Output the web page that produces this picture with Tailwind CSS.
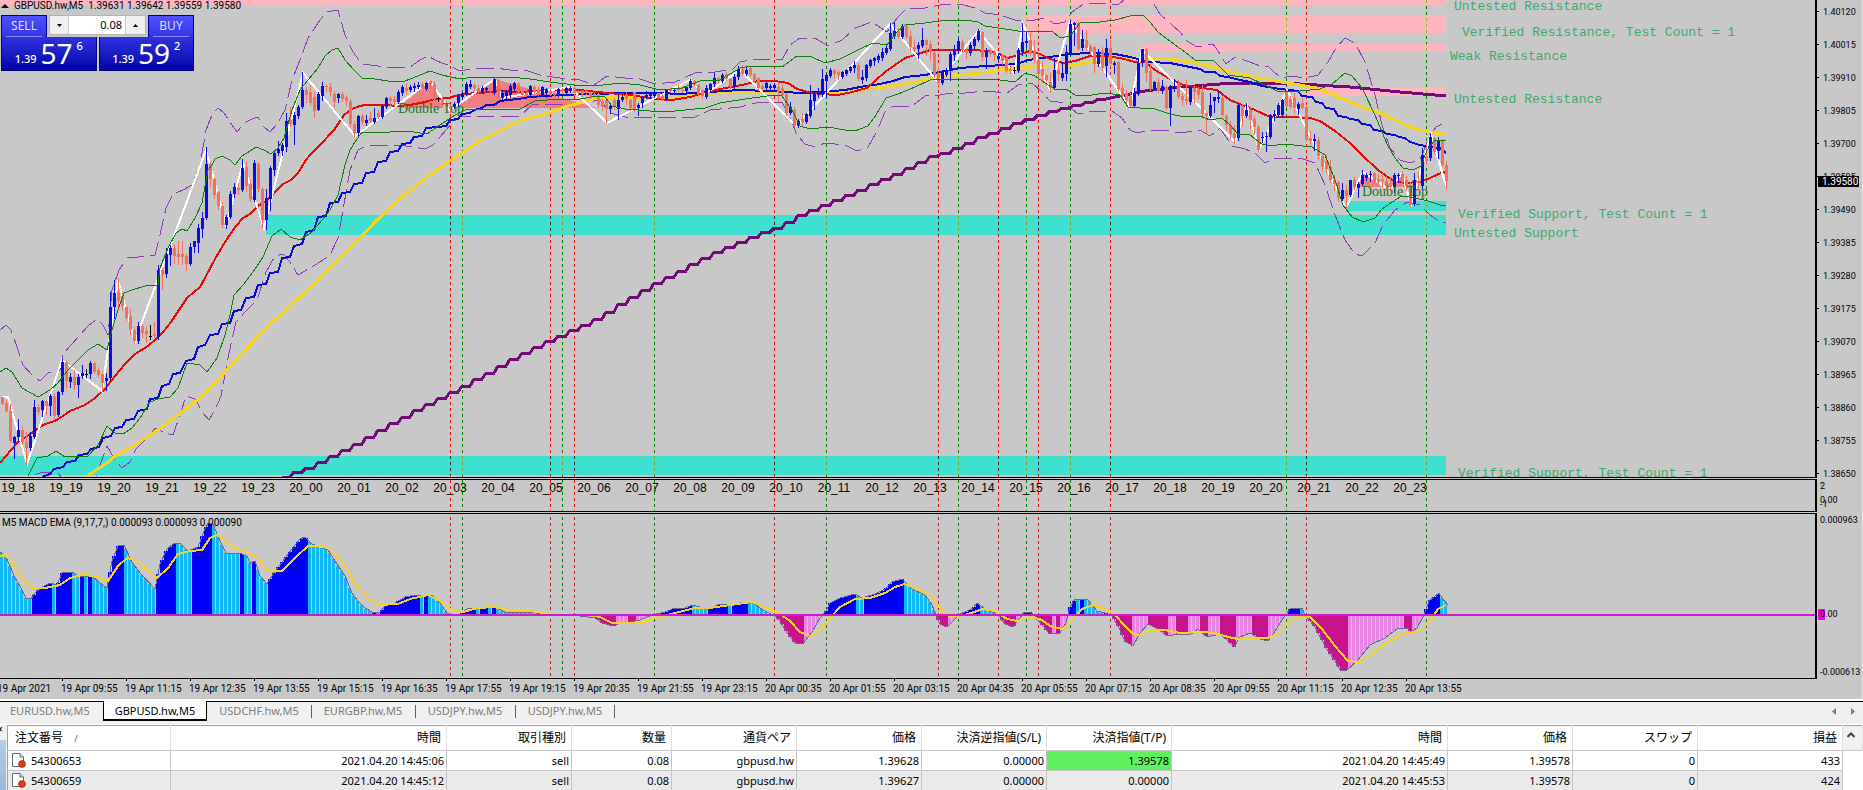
<!DOCTYPE html>
<html lang="ja">
<head>
    <meta charset="UTF-8">
    <meta name="viewport" content="width=device-width, initial-scale=1.0">
    <title>GBPUSD.hw,M5</title>
    <script src="https://cdn.jsdelivr.net/npm/@tailwindcss/browser@4"></script>
</head>
<body class="flex flex-col min-h-screen overflow-hidden bg-[#f0f0f0] text-black font-['Noto_Sans','Noto_Sans_CJK_JP',sans-serif]">

    <!-- Charts -->
    <main class="flex flex-col gap-px bg-[#c8c8c8] border-r border-[#e4e4e4] font-['Roboto',sans-serif] text-[10px] leading-[14px]">

        <!-- Price chart -->
        <section class="relative flex">
            <div class="flex-1 min-w-0 border-r-2 border-b border-black">
                <svg id="price" class="block w-full h-[477px]" shape-rendering="crispEdges"></svg>
            </div>
            <div id="prices" class="relative w-[45px] h-[478px] overflow-hidden">
                <div class="absolute left-px top-[176px] w-[41px] h-[11px] bg-black text-white pl-1 leading-[11px]">1.39580</div>
            </div>

            <!-- One click trading -->
            <div class="absolute left-0 top-0">
                <h1 class="flex items-center gap-[5px] pl-px h-[11px] whitespace-pre"><svg class="w-2 h-[4px]" viewBox="0 0 8 4"><path d="M0 4L4 0L8 4Z"/></svg><span>GBPUSD.hw,M5  1.39631 1.39642 1.39559 1.39580</span></h1>
                <div class="w-[194px] pl-px pt-1 font-['Noto_Sans',sans-serif]">
                    <div class="flex h-[22px] text-[12px] text-[#dcdcff]">
                        <button class="w-[46px] border border-b-0 border-[#000090] bg-linear-to-b from-[#5050ff] to-[#3434e4] px-1"><span class="block h-[21px] leading-[20px] border-b border-[#8c8cf4]">SELL</span></button>
                        <div class="flex flex-1 mx-[2px] mb-[2px] border border-[#b4b4b4] bg-[#f0f0f0]">
                            <button class="w-[18px] flex items-center justify-center" aria-label="Decrease volume"><svg class="w-[5px] h-[3px]" viewBox="0 0 5 3"><path d="M0 0H5L2.500 3Z"/></svg></button>
                            <input class="w-[58px] bg-white text-right text-black text-[11px] pr-[3px] border-x border-[#c8c8c8]" aria-label="Volume" value="0.08">
                            <button class="flex-1 flex items-center justify-center" aria-label="Increase volume"><svg class="w-[5px] h-[3px]" viewBox="0 0 5 3"><path d="M0 3H5L2.500 0Z"/></svg></button>
                        </div>
                        <button class="w-[46px] border border-b-0 border-[#000090] bg-linear-to-b from-[#5050ff] to-[#3434e4] px-1"><span class="block h-[21px] leading-[20px] border-b border-[#8c8cf4]">BUY</span></button>
                    </div>
                    <div class="flex gap-[2px] h-[34px] text-white">
                        <button class="flex flex-1 justify-center gap-1 border border-t-0 border-[#000080] bg-linear-to-b from-[#3030e0] to-[#0000a8]">
                            <span class="pt-[15px] text-[11px] font-medium">1.39</span><span class="text-[28px] leading-[32px]">57</span><span class="pt-[2px] text-[11px] font-medium">6</span>
                        </button>
                        <button class="flex flex-1 justify-center gap-1 border border-t-0 border-[#000080] bg-linear-to-b from-[#3030e0] to-[#0000a8]">
                            <span class="pt-[15px] text-[11px] font-medium">1.39</span><span class="text-[28px] leading-[32px]">59</span><span class="pt-[2px] text-[11px] font-medium">2</span>
                        </button>
                    </div>
                </div>
            </div>
        </section>

        <!-- Hour labels -->
        <section class="flex">
            <div class="flex-1 min-w-0 border-r-2 border-y border-black">
                <svg id="hours" class="block w-full h-[31px]" shape-rendering="crispEdges"></svg>
            </div>
            <div class="relative w-[45px] pl-[3px] text-[9px]">
                <div>2</div>
                <div class="absolute top-[14px]">0.00</div>
                <div class="absolute top-[18px]">-1</div>
            </div>
        </section>

        <!-- MACD -->
        <section class="relative flex">
            <div class="flex-1 min-w-0 border-r-2 border-y border-black">
                <svg id="macd" class="block w-full h-[164px]" shape-rendering="crispEdges"></svg>
            </div>
            <div class="relative flex flex-col justify-between w-[45px] pl-[3px] whitespace-nowrap text-[9px]">
                <div>0.000963</div>
                <div>-0.000613</div>
                <div class="absolute left-px top-[96px] h-[11px] leading-[11px]"><span class="absolute inset-y-0 left-0 w-[7px] bg-[#f000f0]"></span><span class="relative pl-[2px]">0.00</span></div>
            </div>
            <h2 class="absolute left-[2px] top-[3px]">M5 MACD EMA (9,17,7,) 0.000093 0.000093 0.000090</h2>
        </section>

        <div class="h-[20px] -mt-px overflow-hidden">
            <svg id="times" class="block w-full h-[20px]" shape-rendering="crispEdges"></svg>
        </div>
    </main>

    <!-- Chart tabs -->
    <nav class="flex items-start h-[25px] border-t-2 border-white text-[11px] leading-[18px] text-[#7c7c7c]">
        <div class="flex flex-1 h-[20px] border-t border-black">
            <a href="#" class="w-[103px] pl-[10px]">EURUSD.hw,M5</a>
            <a href="#" class="w-[104px] h-[20px] -mt-px bg-white text-black text-center border-x border-b-2 border-black pt-px">GBPUSD.hw,M5</a>
            <a href="#" class="w-[104px] text-center">USDCHF.hw,M5</a>
            <a href="#" class="w-[104px] text-center relative before:absolute before:left-0 before:top-[3px] before:h-[13px] before:border-l before:border-[#606060]">EURGBP.hw,M5</a>
            <a href="#" class="w-[100px] text-center relative before:absolute before:left-0 before:top-[3px] before:h-[13px] before:border-l before:border-[#606060]">USDJPY.hw,M5</a>
            <a href="#" class="w-[100px] text-center relative before:absolute before:left-0 before:top-[3px] before:h-[13px] before:border-l before:border-[#606060] after:absolute after:right-0 after:top-[3px] after:h-[13px] after:border-l after:border-[#606060]">USDJPY.hw,M5</a>
            <div class="flex flex-1 items-center justify-end gap-[15px] pr-2">
                <button aria-label="Previous"><svg class="w-1 h-[7px]" viewBox="0 0 4 7" fill="#7c7c7c"><path d="M4 0V7L0 3.500Z"/></svg></button>
                <button aria-label="Next"><svg class="w-1 h-[7px]" viewBox="0 0 4 7" fill="#7c7c7c"><path d="M0 0V7L4 3.500Z"/></svg></button>
            </div>
        </div>
    </nav>

    <!-- Orders -->
    <section class="flex flex-1 text-[11px] border-t border-white">
        <div class="w-[8px]">
            <div class="h-[15px] leading-[9px] text-[10px] font-bold -ml-[3px]">×</div>
            <div class="w-[6px] h-[50px] bg-linear-to-b from-[#b4cce8] to-[#9cb8dc]"></div>
        </div>
        <table class="flex-1 w-full table-fixed border-collapse bg-white border-t border-l border-[#a0a0a0] text-right">
            <colgroup>
                <col class="w-[163px]"><col class="w-[276px]"><col class="w-[125px]"><col class="w-[100px]"><col class="w-[125px]"><col class="w-[125px]"><col class="w-[125px]"><col class="w-[125px]"><col class="w-[276px]"><col class="w-[125px]"><col class="w-[125px]"><col class="w-[145px]"><col class="w-[20px]">
            </colgroup>
            <thead>
                <tr class="h-[25px] text-[12px] *:font-normal *:pr-[5px] *:border-r *:border-[#e0e0e0] border-b border-b-[#c8c8c8]">
                    <th class="text-left pl-[7px]">注文番号 <span class="text-[9px] text-[#606060] pl-2">/</span></th>
                    <th>時間</th><th>取引種別</th><th>数量</th><th>通貨ペア</th><th>価格</th><th>決済逆指値(S/L)</th><th>決済指値(T/P)</th><th>時間</th><th>価格</th><th>スワップ</th><th>損益</th>
                    <th rowspan="3" class="bg-[#f0f0f0] align-top pt-[6px]"><svg class="w-2 h-[6px] ml-1" viewBox="0 0 8 6" fill="none" stroke="#404040" stroke-width="2"><path d="M0.500 5L4 1.500L7.500 5"/></svg></th>
                </tr>
            </thead>
            <tbody>
                <tr class="h-[20px] leading-[17px] *:pr-[2px] *:py-0 *:border-r *:border-b *:border-[#c4c4c4]">
                    <td class="pl-[3px]"><div class="flex items-center gap-[5px]"><svg class="w-[15px] h-[15px]" viewBox="0 0 15 15"><path d="M1.500 .5H9L12.500 4V13.500H1.500Z" fill="#fff" stroke="#606870"/><path d="M9 .5V4H12.500" fill="#ddd" stroke="#606870"/><circle cx="11" cy="11" r="3.500" fill="#d8401c" stroke="#982000" stroke-width=".6"/></svg>54300653</div></td>
                    <td>2021.04.20 14:45:06</td><td>sell</td><td>0.08</td><td>gbpusd.hw</td><td>1.39628</td><td>0.00000</td><td class="bg-[#60f060]">1.39578</td><td>2021.04.20 14:45:49</td><td>1.39578</td><td>0</td><td>433</td>
                </tr>
                <tr class="h-[20px] leading-[17px] bg-[#eaeaea] *:pr-[2px] *:py-0 *:border-r *:border-[#c4c4c4]">
                    <td class="pl-[3px]"><div class="flex items-center gap-[5px]"><svg class="w-[15px] h-[15px]" viewBox="0 0 15 15"><path d="M1.500 .5H9L12.500 4V13.500H1.500Z" fill="#fff" stroke="#606870"/><path d="M9 .5V4H12.500" fill="#ddd" stroke="#606870"/><circle cx="11" cy="11" r="3.500" fill="#d8401c" stroke="#982000" stroke-width=".6"/></svg>54300659</div></td>
                    <td>2021.04.20 14:45:12</td><td>sell</td><td>0.08</td><td>gbpusd.hw</td><td>1.39627</td><td>0.00000</td><td>0.00000</td><td>2021.04.20 14:45:53</td><td>1.39578</td><td>0</td><td>424</td>
                </tr>
            </tbody>
        </table>
    </section>

    <script>
        // Candles, 4px apart: colour, high, body top, body bottom, low
        const candles = `r397,397,404,404 r400,403,411,412 r404,411,441,442 b436,437,443,458 b419,430,437,440 r426,430,442,444 r432,442,448,465 b432,436,448,450 b400,407,437,438 r404,407,412,414
            b400,401,410,416 r400,401,406,414 b394,396,406,415 r393,396,416,419 b391,392,415,416 b358,362,392,394 r361,362,381,388 b373,377,382,387 r370,377,385,389 b374,377,385,397
            b365,373,376,378 k369,374,375,377 b361,363,374,378 r362,363,372,373 r367,370,375,377 r372,374,383,391 b373,378,381,390 b292,307,378,379 b280,293,307,318 r278,292,301,306
            r292,296,306,310 r306,307,318,320 r309,316,330,334 r327,330,341,343 b322,326,341,343 r324,326,333,337 r327,331,334,342 k325,336,337,339 r322,334,336,337 b265,270,337,339
            r268,270,275,289 b248,254,274,277 b245,248,255,265 r244,248,256,263 r241,254,257,264 r241,254,257,264 r254,256,264,270 b243,247,264,265 b241,241,247,252 b224,228,243,252
            b212,218,229,237 b147,164,218,219 r162,164,179,186 r178,179,195,198 r191,192,206,209 r202,206,225,227 b215,217,225,228 b191,194,217,218 b183,187,194,197 r183,188,190,194
            b159,168,190,191 r161,167,186,191 r180,184,199,201 b160,163,200,201 r162,164,189,191 r187,189,220,228 b189,198,220,229 b166,168,199,210 b151,153,170,175 b141,149,153,155
            b143,145,151,155 b113,121,147,151 r107,120,124,126 b112,115,125,144 b105,107,116,118 b72,90,107,108 r87,90,95,102 r85,92,103,105 r92,97,111,117 b92,94,110,110
            b82,86,96,100 r84,86,87,91 r83,87,92,95 r91,94,102,107 b93,94,98,102 r92,94,99,101 r95,97,101,105 r99,101,124,126 r121,124,133,136 b115,116,133,135
            r114,116,122,124 b115,120,123,125 r112,118,121,122 b108,118,122,123 r110,113,117,118 b105,106,117,118 b97,98,107,108 r96,98,101,105 r96,99,102,106 b90,92,102,103
            b85,87,93,95 r83,88,91,94 b85,87,90,91 b83,86,88,91 b82,85,87,88 r82,84,88,89 b82,83,89,90 r80,81,84,88 r81,84,99,100 k97,98,99,101
            r97,99,105,107 r101,104,107,109 r103,106,109,112 b102,104,107,108 b94,96,103,105 b92,94,97,99 b82,84,94,95 b80,84,87,88 r84,85,88,91 r85,88,92,94
            b86,88,92,93 b87,88,90,91 r85,88,90,92 b78,79,93,94 r79,80,97,98 b90,93,98,99 b90,92,96,98 b84,86,95,97 b82,83,89,91 r82,84,92,93
            r87,90,95,97 r91,93,95,96 b85,86,95,96 r85,87,92,94 r86,89,94,95 b86,87,95,95 b88,90,93,97 r89,91,94,95 r91,93,95,96 b88,89,95,96
            r88,89,91,93 b87,88,93,94 b86,88,91,92 r86,88,93,95 r90,91,93,95 r90,91,94,98 r89,91,93,94 r92,93,96,98 r92,94,96,97 r93,94,105,107
            r99,101,107,110 r99,100,109,123 b103,106,109,113 r98,100,107,109 b94,100,109,119 b95,97,100,101 r92,95,99,104 r99,100,108,110 r92,92,109,111 b103,105,108,115
            b96,97,103,107 b91,95,97,98 b92,94,96,98 b89,93,96,97 r93,93,98,100 r94,96,99,100 b89,90,99,100 r88,89,91,92 b89,90,91,93 r84,88,90,91
            r88,90,91,92 b86,87,91,94 b79,81,88,89 r80,81,85,86 r84,85,94,96 r89,90,96,98 b85,88,97,98 b83,84,90,91 b73,78,84,86 r77,78,81,83
            b73,75,81,82 r72,74,79,80 r78,79,87,88 b74,77,87,88 b66,69,77,79 r65,69,74,75 b67,70,74,75 r67,68,75,76 r73,74,80,82 r77,78,88,90
            r83,86,89,90 b82,83,88,89 b84,86,88,89 b83,85,88,91 r82,87,92,101 r85,88,95,96 r93,94,113,115 b102,107,113,114 r107,110,126,127 b119,121,126,127
            r113,119,122,126 b113,114,122,123 b85,100,116,117 b91,94,101,109 b88,92,95,97 b69,79,94,96 b73,75,81,97 b68,70,76,77 r69,70,74,77 r70,72,75,79
            b71,72,77,78 b69,70,74,75 b66,67,71,72 b61,65,68,72 r63,65,79,80 b70,77,80,83 b64,65,78,80 b59,60,66,67 b57,58,61,65 b54,56,60,62
            b48,52,58,60 b44,48,53,54 b23,33,49,50 b22,31,36,38 r28,32,37,38 b24,26,37,38 r25,26,37,38 r30,36,47,50 r39,47,50,51 b42,45,49,58
            b28,40,46,47 r39,40,45,55 r41,44,52,60 r51,53,75,77 r66,73,83,85 b70,72,83,84 b68,70,75,76 b52,54,71,80 b45,50,55,60 b38,41,51,53
            r39,42,50,51 r48,50,53,58 b42,45,53,55 b37,39,46,49 b29,31,40,41 r31,32,57,60 b48,51,57,68 r49,51,54,56 r50,52,55,60 b53,56,59,61
            r54,55,61,64 r56,58,71,72 r66,69,71,73 k67,70,71,73 b48,50,71,72 b23,42,52,55 b32,41,43,47 r31,40,53,55 r40,50,60,62 r54,60,74,84
            r61,69,76,80 r74,75,80,85 r72,82,88,92 b58,70,88,89 r62,70,74,80 b62,73,78,80 b45,52,74,80 b20,24,54,55 b22,23,25,45 r21,23,49,50
            b30,39,48,50 r30,40,48,50 r44,46,52,54 r46,47,64,72 b49,52,64,66 r47,51,68,70 b39,48,66,76 r40,48,64,66 b61,63,65,73 r61,62,89,90
            r83,88,96,98 r90,93,100,103 r93,96,106,107 b88,93,106,107 b60,63,94,95 b49,49,63,66 r48,49,73,81 r64,71,89,90 b81,82,89,90 r78,82,91,92
            b80,86,91,93 r85,87,108,109 b85,86,108,125 b79,86,89,91 r80,83,97,98 r93,96,100,105 r80,99,101,104 b86,88,102,104 r86,88,92,103 r87,89,95,98
            r85,92,114,115 r111,113,116,132 b93,105,116,117 b97,97,101,112 b91,97,99,102 r96,98,115,116 r114,116,125,130 r121,125,134,138 r125,134,138,143 b104,105,138,140
            r104,106,116,125 b103,110,116,117 r106,110,120,128 r116,119,127,134 r125,127,150,151 b132,137,138,142 b132,136,137,151 b114,115,137,138 b110,114,116,120 b103,105,115,117
            b99,100,115,117 r90,92,106,107 r96,99,107,108 r93,98,108,113 b102,104,109,114 r98,103,108,109 r106,107,140,141 r131,138,141,144 b134,139,141,150 r137,140,156,158
            r155,156,167,170 r154,161,169,172 r160,167,180,182 r175,180,184,190 r181,182,198,201 b183,190,199,200 r185,190,196,208 b180,180,195,196 r177,180,187,189 b182,184,188,197
            b170,175,184,185 b173,175,178,180 b171,174,175,181 r172,173,182,183 r174,179,182,184 r173,179,181,186 r176,181,186,190 r177,185,187,190 b173,175,187,192 b173,175,176,182
            r171,174,182,183 r176,180,186,190 r182,185,205,206 b173,180,204,205 r172,181,183,187 b148,155,186,188 r144,156,161,164 b133,137,158,160 r137,138,152,153 b137,140,151,158
            r139,141,165,166 r161,165,181,188`.trim().split(/\s+/);

        // Indicator lines as x,y pairs
        const maRed = '0,463 17,443 33,432 43,425 57,420 70,411 85,405 95,398 105,389 115,376 125,364 135,354 148,346 157,338 163,332 171,322 187,298 200,287 205,278 215,259 222,247 229,236 236,226 243,218 250,214 258,206 266,201 272,195 283,184 291,180 298,173 306,160 310,155 320,145 334,130 344,115 352,109 360,106 365,105 385,105 398,106 410,105 425,102 435,99 448,98 463,94 480,93 500,91 520,92 550,90 580,90 597,92 620,94 637,96 655,99 672,100 690,97 708,92 725,88 742,85 758,81 775,81 788,83 797,89 808,92 820,94 838,95 852,92 867,88 875,81 885,72 895,65 905,58 918,54 930,50 975,50 995,52 1008,58 1018,55 1030,51 1040,54 1050,59 1063,63 1075,61 1090,56 1105,56 1120,58 1135,62 1145,62 1155,70 1170,79 1183,85 1195,87 1217,90 1230,100 1242,105 1255,110 1270,117 1290,117 1310,118 1320,121 1335,131 1350,143 1362,155 1378,170 1392,180 1405,183 1420,182 1430,178 1443,172 1446,173';
        const maBlue = '42,477 50,474 54,469 63,467 67,462 75,461 79,455 87,454 91,449 99,447 103,438 111,436 115,428 122,427 126,420 134,419 138,411 147,409 150,399 158,398 162,386 169,384 173,374 180,373 186,361 194,359 198,347 205,345 210,335 218,334 222,324 230,323 234,311 241,310 246,298 254,297 258,285 266,284 270,273 278,272 282,258 290,257 294,246 302,244 306,232 314,230 318,217 326,216 330,203 338,202 342,193 350,192 354,184 362,183 366,173 374,172 378,162 386,161 390,152 398,151 402,144 410,143 414,137 422,136 426,128 438,127 446,126 450,120 458,119 462,114 470,113 474,110 482,108 486,105 494,105 500,101 518,99 530,97 545,96 560,95 590,94 630,93 660,93 680,94 710,92 740,90 770,91 800,93 820,92 845,90 860,87 880,84 893,81 905,77 925,75 940,72 950,70 960,68 985,66 1005,65 1020,63 1028,60 1050,57 1070,54 1090,53 1115,54 1130,57 1150,62 1170,63 1185,66 1200,69 1205,72 1215,72 1220,76 1228,77 1240,80 1250,82 1262,86 1280,89 1298,91 1302,96 1312,97 1316,102 1322,103 1326,108 1334,109 1338,116 1346,117 1350,119 1358,120 1362,124 1370,125 1374,130 1382,131 1387,134 1395,135 1399,137 1405,138 1410,142 1420,145 1432,147 1440,148 1446,153';
        const maGold = '84,478 96,470 107,463 114,457 133,446 158,430 183,411 200,398 214,384 233,363 250,345 267,327 283,313 300,297 320,278 358,240 375,222 398,200 427,177 450,161 478,142 500,131 520,121 545,114 565,107 587,101 597,98 615,97 640,98 655,99 675,98 690,96 715,93 735,91 760,91 790,92 850,92 865,89 885,87 905,84 925,80 940,77 960,75 980,73 1000,70 1020,68 1045,66 1070,66 1085,63 1105,60 1120,58 1145,58 1170,59 1190,62 1210,66 1230,72 1250,76 1275,81 1300,85 1315,88 1330,93 1345,100 1362,107 1378,112 1395,120 1415,129 1430,132 1446,135';
        const maPurple = '282,478 309,468 356,445 416,411 475,381 523,354 594,321 653,286 713,254 758,235 782,226 800,216 830,203 855,193 875,183 895,175 915,165 935,156 945,153 965,145 985,136 1000,131 1015,124 1030,119 1050,112 1075,106 1090,102 1105,98 1120,96 1145,91 1170,88 1195,86 1220,84 1250,83 1300,84 1350,87 1400,92 1446,96';
        const bandUp = '0,372 6,368 12,372 22,388 38,397 50,390 58,383 68,370 78,360 88,350 98,344 107,350 112,330 118,310 124,293 132,290 145,286 158,285 160,268 168,248 176,233 182,229 187,231 195,218 202,203 208,170 212,165 215,159 222,156 230,160 235,165 242,156 250,151 256,147 264,150 271,154 278,148 284,138 292,110 300,90 308,80 318,68 325,56 332,50 338,48 345,60 355,71 362,78 375,79 388,81 405,81 418,76 430,71 442,75 460,79 475,77 510,77 530,79 550,82 575,85 595,86 620,83 640,85 660,90 682,88 700,81 720,80 740,68 750,66 782,67 797,56 812,57 825,63 840,59 858,50 873,43 887,45 897,32 905,25 925,23 940,21 950,20 965,20 978,22 985,26 1005,29 1025,32 1052,31 1060,38 1070,36 1080,23 1100,22 1115,20 1130,16 1143,15 1150,22 1158,32 1175,45 1185,52 1195,60 1213,60 1220,67 1228,75 1250,78 1265,85 1279,92 1300,91 1320,89 1332,84 1345,73 1352,76 1362,88 1375,115 1387,144 1395,158 1403,168 1413,170 1421,166 1427,150 1434,141 1446,140';
        const bandLow = '28,476 37,458 48,456 56,451 65,457 88,456 98,445 107,426 115,433 123,434 132,428 140,418 150,402 158,399 170,397 178,388 187,363 200,365 207,372 217,358 225,335 230,315 234,295 243,285 253,272 263,257 272,236 281,229 290,237 300,240 312,232 322,220 330,210 338,195 345,165 350,150 355,142 362,132 390,132 407,131 427,134 440,125 455,115 465,110 495,109 520,109 535,101 560,99 580,99 597,96 605,97 612,106 625,109 650,111 675,111 705,108 720,103 745,99 775,95 782,96 792,110 800,126 810,129 828,127 845,130 855,131 868,126 876,115 886,98 898,94 915,87 930,80 970,79 1000,80 1015,82 1025,73 1035,76 1045,83 1055,89 1066,89 1075,95 1085,96 1105,93 1120,95 1128,107 1140,108 1155,109 1170,114 1185,117 1200,116 1210,120 1222,118 1230,125 1238,134 1250,135 1262,144 1270,146 1285,144 1312,147 1325,155 1335,180 1343,205 1352,217 1363,222 1375,218 1382,209 1392,202 1402,196 1415,198 1428,201 1440,205 1446,205';
        const outerUp = '0,330 6,325 11,330 18,350 23,365 32,375 40,381 48,373 60,370 63,354 88,326 97,319 103,325 108,335 112,290 119,270 127,258 138,257 155,255 160,235 166,208 173,194 183,190 192,185 200,165 206,130 212,115 218,108 224,113 232,125 237,132 244,123 252,119 258,117 264,127 270,132 277,124 285,110 292,80 300,60 308,38 320,20 327,12 338,10 345,35 353,52 362,64 378,66 392,68 410,67 420,60 428,56 437,61 450,66 460,71 475,68 495,68 510,70 525,70 540,75 560,78 580,80 594,85 607,76 625,78 640,79 655,84 675,82 695,73 715,72 733,69 740,62 755,59 782,60 790,45 800,38 815,38 828,46 842,40 855,28 872,22 887,32 897,18 907,8 925,8 940,5 960,4 975,8 985,13 1000,15 1015,20 1030,21 1045,18 1055,24 1065,22 1072,12 1085,3 1105,3 1118,5 1126,-2 1150,-2 1160,14 1172,25 1180,32 1187,41 1197,47 1213,44 1220,54 1226,64 1235,57 1250,62 1260,66 1268,66 1275,73 1283,78 1290,76 1305,78 1318,75 1328,62 1336,48 1345,38 1355,43 1365,62 1375,95 1382,125 1390,148 1400,160 1410,163 1420,160 1428,140 1436,127 1442,124';
        const outerLow = '35,475 42,472 58,473 62,478 96,478 100,465 107,446 115,460 122,468 130,462 136,449 150,435 155,428 165,433 173,435 180,415 186,396 195,399 203,413 209,420 215,410 221,396 228,358 236,322 245,312 257,300 266,272 275,256 283,254 290,262 298,275 310,268 320,262 330,255 338,238 343,210 350,170 358,150 366,146 385,145 400,145 425,149 433,145 440,137 452,123 460,117 495,116 520,116 532,105 550,104 575,104 600,100 610,113 625,117 695,117 710,110 740,107 760,102 782,102 790,118 797,135 805,144 815,147 825,143 845,145 857,151 868,147 876,133 885,112 892,107 912,106 925,96 940,95 950,93 965,93 985,91 1007,93 1018,85 1032,83 1042,92 1050,101 1065,103 1078,114 1095,111 1112,111 1122,118 1130,130 1137,133 1150,130 1165,130 1180,133 1200,130 1210,136 1220,128 1232,146 1245,149 1255,153 1265,163 1275,158 1300,158 1315,163 1325,185 1335,215 1345,240 1355,254 1362,256 1375,243 1383,225 1395,210 1407,202 1420,205 1430,215 1440,222 1446,222';
        const zigzag = '2,397 8,397 27,464 62,360 102,391 118,280 135,342 142,322 206,150 226,225 243,163 264,228 303,73 355,136 430,81 450,110 495,79 502,98 570,87 607,123 690,80 704,95 740,70 796,126 890,24 938,82 978,31 1014,73 1023,24 1050,90 1070,22 1130,107 1142,50 1235,142 1247,105 1259,150 1287,90 1346,208 1363,172 1390,190 1402,173 1411,205 1431,134 1446,186';

        // MACD
        const macdTop = '0,551 5,554 10,565 15,577 20,585 26,597 31,598 35,592 42,586 50,582 57,584 62,572 72,571 78,575 92,575 100,582 107,587 112,560 118,545 124,544 132,561 140,572 155,588 160,563 167,548 173,543 180,542 188,550 198,546 204,530 208,522 213,523 220,540 226,552 240,552 247,555 250,562 255,560 260,575 267,583 275,570 283,560 292,548 300,538 305,536 312,543 320,546 328,549 335,560 345,575 352,592 357,599 365,607 372,611 380,611 385,605 395,602 405,596 415,594 432,594 440,602 447,612 452,615 460,614 468,607 480,608 493,605 505,611 530,611 548,614 580,615 595,617 602,622 613,625 620,622 630,621 640,619 652,614 665,611 672,608 685,607 692,604 708,608 720,603 735,603 745,601 752,601 763,609 773,614 780,620 787,632 795,642 803,643 812,631 820,617 826,610 830,602 840,597 855,593 862,597 875,593 885,588 892,581 902,578 912,588 925,594 932,604 936,614 940,623 947,626 955,618 960,613 965,611 973,607 977,602 985,608 995,612 1000,617 1005,623 1013,626 1020,617 1024,611 1030,611 1035,615 1042,624 1050,633 1060,632 1066,622 1070,606 1075,598 1087,598 1097,610 1105,612 1112,615 1118,625 1125,640 1133,645 1140,632 1148,623 1158,628 1167,635 1180,633 1190,634 1198,628 1207,636 1220,633 1228,640 1234,646 1240,636 1250,632 1260,638 1268,640 1275,630 1284,616 1290,608 1302,607 1305,614 1315,626 1325,645 1335,660 1340,669 1347,669 1357,660 1370,644 1385,637 1397,628 1407,627 1411,631 1417,627 1424,614 1429,600 1434,596 1439,592 1442,597 1448,604';
        const macdSignal = '0,555 5,554 12,561 20,574 27,583 33,587 45,587 60,584 70,577 82,574 95,575 108,580 118,565 127,557 135,559 145,567 157,577 168,567 178,553 190,550 202,549 210,537 217,534 225,540 235,547 247,551 258,557 268,570 282,570 295,557 308,545 318,545 328,547 338,556 347,568 355,582 365,595 378,604 398,603 410,598 428,594 440,600 452,609 463,611 478,607 495,606 510,609 530,610 550,613 590,614 600,616 612,622 640,622 655,617 675,612 695,607 710,607 730,604 752,601 765,606 780,613 790,620 800,631 810,635 820,630 830,617 840,606 855,598 870,597 885,592 895,586 905,583 918,588 932,596 942,610 950,616 965,614 983,608 995,610 1007,618 1018,620 1028,616 1040,618 1052,626 1063,628 1072,618 1082,608 1093,604 1105,608 1115,614 1125,625 1133,633 1140,634 1150,629 1165,629 1180,632 1200,631 1215,632 1228,636 1238,638 1250,637 1268,637 1278,632 1290,620 1300,615 1310,616 1322,628 1335,645 1348,660 1360,661 1375,650 1390,640 1403,633 1420,630 1430,620 1438,608 1446,604';
        // Stretches where the histogram is moving away from zero
        const strong = [[32,52],[56,72],[80,84],[88,92],[108,124],[156,176],[192,212],[240,244],[252,256],[268,308],[372,376],[380,420],[424,428],[460,476],[480,488],[492,496],[592,616],[628,636],[660,692],[708,728],[732,748],[776,804],[824,856],[864,904],[936,948],[960,980],[1000,1016],[1024,1052],[1056,1060],[1068,1076],[1080,1084],[1104,1132],[1148,1168],[1176,1188],[1200,1208],[1220,1236],[1252,1268],[1284,1300],[1304,1348],[1404,1412],[1424,1440]];

        const reds = [450, 550, 574, 774, 938, 998, 1038, 1110, 1306];
        const greens = [462, 562, 654, 826, 958, 1026, 1070, 1286, 1426];

        const pts = s => s.split(' ').map(p => p.split(',').map(Number));
        const line = (points, color, width, extra = '') => `<polyline points="${points}" fill="none" stroke="${color}" stroke-width="${width}" ${extra}/>`;
        const rect = (x, y, w, h, color) => `<rect x="${x}" y="${y}" width="${w}" height="${h}" fill="${color}"/>`;

        function at(points, x) {
            for (let i = 1; i < points.length; i++) {
                const [x0, y0] = points[i - 1], [x1, y1] = points[i];
                if (x <= x1) return y0 + (y1 - y0) * (x - x0) / (x1 - x0);
            }
            return points[points.length - 1][1];
        }

        // The slow average moves once every three bars
        function stairs(s) {
            const points = pts(s), out = [];
            let x = 282;
            for (; x < 1105; x += 12) {
                const y = Math.round(at(points, x + 4));
                out.push(`${x},${y}`, `${x + 8},${y}`);
            }
            return out.concat(points.filter(p => p[0] > x).map(p => p.join(','))).join(' ');
        }

        function signals(y0, y1, red = '#e01010', green = '#087808', from = 0) {
            const draw = (list, color) => list.filter(x => x >= from).map(x =>
                `<path d="M${x}.5 ${y0}V${y1}" stroke="${color}" stroke-dasharray="3 3" stroke-dashoffset="${y0 % 6}"/>`).join('');
            return draw(reds, red) + draw(greens, green);
        }

        // Price pane
        const zones = [[0,0,5,'#ffb6c1'], [1023,15,18,'#ffb6c1'], [1142,44,8,'#ffb6c1'], [1308,87,9,'#ffb6c1'], [1347,201,10,'#40e0d0'], [266,215,20,'#40e0d0'], [0,456,19,'#40e0d0']];
        let svg = signals(0, 477);
        for (const [x, y, h, c] of zones) {
            svg += rect(x, y, 1446 - x, h, c);
            svg += c === '#40e0d0' ? signals(y, y + h, '#303030', '#88a030', x) : signals(y, y + h, '#a05020', '#80c020', x);
        }
        for (const p of ['398,108 431,81 443,108', '453,108 495,79 597,108', '1358,187 1363,172 1382,187', '1384,187 1402,174 1410,187']) {
            svg += `<polygon points="${p}" fill="#f08080"/>`;
        }
        svg += line(outerUp, '#8c3cb4', 1, 'stroke-dasharray="18 6"') + line(outerLow, '#8c3cb4', 1, 'stroke-dasharray="18 6"');
        svg += line(stairs(maPurple), '#740a78', 3);
        svg += line(maGold, '#f8d41c', 3) + line(maBlue, '#0808d8', 2) + line(maRed, '#e80808', 2);
        svg += line(zigzag, '#fff', 2);
        const ink = { r: '#f4705a', b: '#0c0cdc', k: '#000' };
        candles.forEach((c, i) => {
            const [h, t, b, l] = c.slice(1).split(',').map(Number);
            const x = 1 + 4 * i;
            svg += rect(x + 1, h, 1, l - h + 1, ink[c[0]]) + rect(x, t, 3, Math.max(b - t, 1), ink[c[0]]);
        });
        svg += line(bandUp, '#107c10', 1) + line(bandLow, '#107c10', 1);
        const notes = [[1454,10,'Untested Resistance'], [1462,36,'Verified Resistance, Test Count = 1'], [1450,60,'Weak Resistance'], [1454,103,'Untested Resistance'], [1458,218,'Verified Support, Test Count = 1'], [1454,237,'Untested Support'], [1458,477,'Verified Support, Test Count = 1']];
        for (const [x, y, s] of notes) svg += `<text x="${x}" y="${y}" fill="#3cab6c" class="font-['Liberation_Mono',monospace] text-[13px]">${s}</text>`;
        for (const [x, y] of [[398,113], [1362,196]]) svg += `<text x="${x}" y="${y}" fill="#1c741c" class="font-['Liberation_Serif',serif] text-[14px]">Double Top</text>`;
        document.getElementById('price').innerHTML = svg;

        // Price scale
        let scale = '';
        for (let i = 0; i < 15; i++) {
            scale += `<div class="flex items-center gap-1 h-[33px]"><span class="w-[2px] h-px bg-black"></span>${(1.4012 - i * 0.00105).toFixed(5)}</div>`;
        }
        document.getElementById('prices').insertAdjacentHTML('afterbegin', `<div class="-mt-[5px] text-[9px]">${scale}</div>`);

        // Hours
        svg = signals(0, 31);
        for (let i = 0; i < 30; i++) {
            const hour = (18 + i) % 24;
            svg += `<text x="${18 + 48 * i}" y="12" text-anchor="middle" class="font-['Liberation_Sans',sans-serif] text-[12px]">${i < 6 ? 19 : 20}_${String(hour).padStart(2, '0')}</text>`;
        }
        document.getElementById('hours').innerHTML = svg;

        // MACD pane, its top edge is at 513
        svg = '';
        const heights = pts(macdTop);
        for (let x = 0; x < 1448; x += 4) {
            const y = Math.round(at(heights, x + 2));
            const up = y < 614, dark = strong.some(([a, b]) => x >= a && x < b);
            const y0 = Math.min(y, 614), h = Math.abs(y - 614);
            if (dark) svg += rect(x, y0, 4, h, up ? '#0000f8' : '#c8148c');
            else svg += rect(x, y0, 4, h, up ? '#8cd4ec' : '#f0b0f0') + rect(x, y0, 3, h, up ? '#10b8f4' : '#e884e4');
        }
        svg += line(macdTop, '#686890', 1) + line(macdSignal, '#f8d028', 2) + rect(0, 613, '100%', 2, '#c81cd0');
        document.getElementById('macd').innerHTML = `<g transform="translate(0 -513)">${signals(513, 677)}${svg}</g>`;

        // Time scale
        const times = ['19 Apr 2021', '19 Apr 09:55', '19 Apr 11:15', '19 Apr 12:35', '19 Apr 13:55', '19 Apr 15:15', '19 Apr 16:35', '19 Apr 17:55', '19 Apr 19:15', '19 Apr 20:35', '19 Apr 21:55', '19 Apr 23:15', '20 Apr 00:35', '20 Apr 01:55', '20 Apr 03:15', '20 Apr 04:35', '20 Apr 05:55', '20 Apr 07:15', '20 Apr 08:35', '20 Apr 09:55', '20 Apr 11:15', '20 Apr 12:35', '20 Apr 13:55'];
        svg = '';
        times.forEach((label, i) => {
            svg += rect(64 * i - 2, 0, 1, 2, '#000') + `<text x="${64 * i - 3}" y="13">${label}</text>`;
        });
        document.getElementById('times').innerHTML = svg;
    </script>
</body>
</html>
